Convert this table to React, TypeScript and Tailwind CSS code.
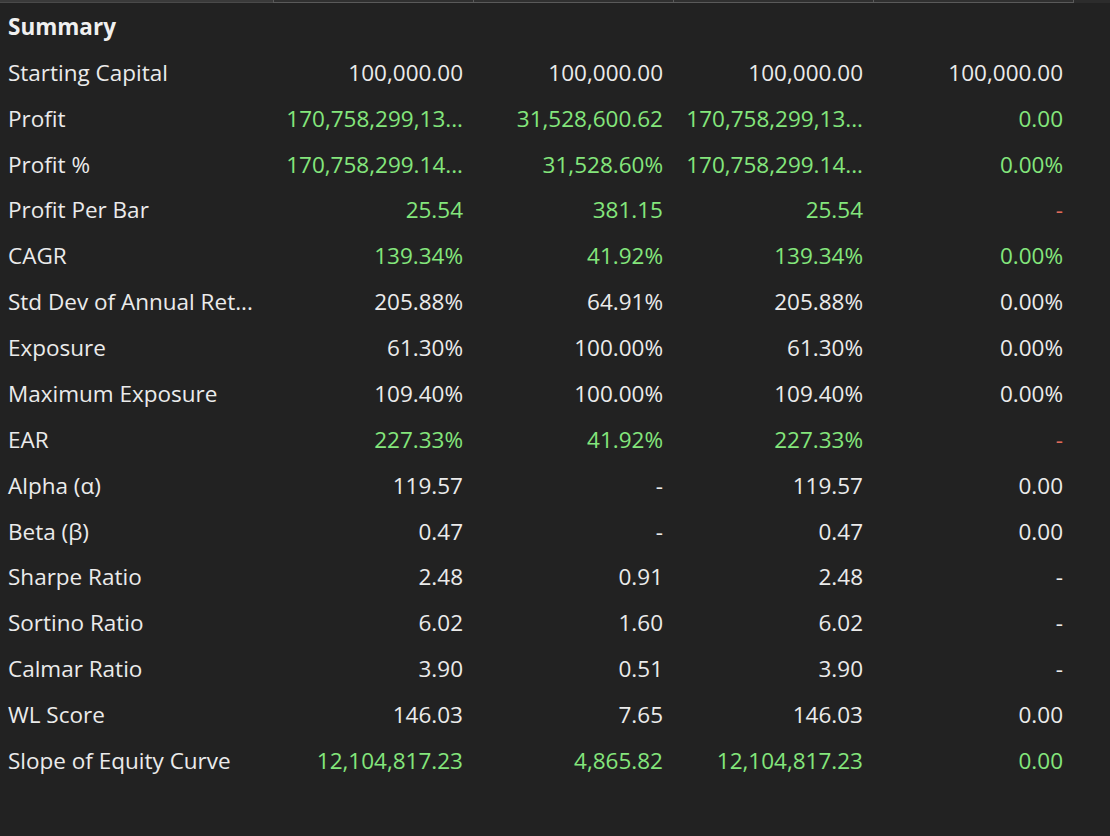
import React from 'react';

type Tone = 'plain' | 'green' | 'red';

interface Cell {
  text: string;
  tone: Tone;
}

const p = (text: string): Cell => ({ text, tone: 'plain' });
const g = (text: string): Cell => ({ text, tone: 'green' });
const r = (text: string): Cell => ({ text, tone: 'red' });

const rows: { label: string; cells: Cell[] }[] = [
  { label: 'Starting Capital', cells: [p('100,000.00'), p('100,000.00'), p('100,000.00'), p('100,000.00')] },
  { label: 'Profit', cells: [g('170,758,299,13...'), g('31,528,600.62'), g('170,758,299,13...'), g('0.00')] },
  { label: 'Profit %', cells: [g('170,758,299.14...'), g('31,528.60%'), g('170,758,299.14...'), g('0.00%')] },
  { label: 'Profit Per Bar', cells: [g('25.54'), g('381.15'), g('25.54'), r('-')] },
  { label: 'CAGR', cells: [g('139.34%'), g('41.92%'), g('139.34%'), g('0.00%')] },
  { label: 'Std Dev of Annual Ret...', cells: [p('205.88%'), p('64.91%'), p('205.88%'), p('0.00%')] },
  { label: 'Exposure', cells: [p('61.30%'), p('100.00%'), p('61.30%'), p('0.00%')] },
  { label: 'Maximum Exposure', cells: [p('109.40%'), p('100.00%'), p('109.40%'), p('0.00%')] },
  { label: 'EAR', cells: [g('227.33%'), g('41.92%'), g('227.33%'), r('-')] },
  { label: 'Alpha (α)', cells: [p('119.57'), p('-'), p('119.57'), p('0.00')] },
  { label: 'Beta (β)', cells: [p('0.47'), p('-'), p('0.47'), p('0.00')] },
  { label: 'Sharpe Ratio', cells: [p('2.48'), p('0.91'), p('2.48'), p('-')] },
  { label: 'Sortino Ratio', cells: [p('6.02'), p('1.60'), p('6.02'), p('-')] },
  { label: 'Calmar Ratio', cells: [p('3.90'), p('0.51'), p('3.90'), p('-')] },
  { label: 'WL Score', cells: [p('146.03'), p('7.65'), p('146.03'), p('0.00')] },
  { label: 'Slope of Equity Curve', cells: [g('12,104,817.23'), g('4,865.82'), g('12,104,817.23'), g('0.00')] },
];

const toneClass: Record<Tone, string> = {
  plain: 'text-[#ebebeb]',
  green: 'text-[#84e67c]',
  red: 'text-[#e06a5a]',
};

export default function App() {
  return (
    <div
      className="w-[1110px] h-[836px] bg-[#222222] overflow-hidden text-[22.5px]"
      style={{ fontFamily: '"Open Sans", "Noto Sans", sans-serif' }}
    >
      {/* Header row, scrolled almost out of view */}
      <div className="flex h-[3px]">
        <div className="w-[273px] bg-[#3a3a3a] border-b border-[#4a4a4a]"></div>
        {[0, 1, 2, 3].map((i) => (
          <div key={i} className="w-[200px] bg-[#303030] border-l border-b border-[#5a5a5a]"></div>
        ))}
        <div className="flex-1 bg-[#2c2c2c] border-l border-[#5a5a5a]"></div>
      </div>

      <div className="grid grid-cols-[273px_200px_200px_200px_200px] pt-px">
        <div className="h-[45.87px] flex items-center pl-2 font-bold text-[#f0f0f0]">Summary</div>
        <div className="col-span-4"></div>

        {rows.map((row) => (
          <React.Fragment key={row.label}>
            <div className="h-[45.87px] flex items-center pl-2 text-[#ebebeb] whitespace-nowrap overflow-hidden">
              {row.label}
            </div>
            {row.cells.map((cell, i) => (
              <div
                key={i}
                className={`h-[45.87px] flex items-center justify-end pr-[10px] whitespace-nowrap overflow-hidden ${toneClass[cell.tone]}`}
              >
                {cell.text}
              </div>
            ))}
          </React.Fragment>
        ))}
      </div>
    </div>
  );
}
